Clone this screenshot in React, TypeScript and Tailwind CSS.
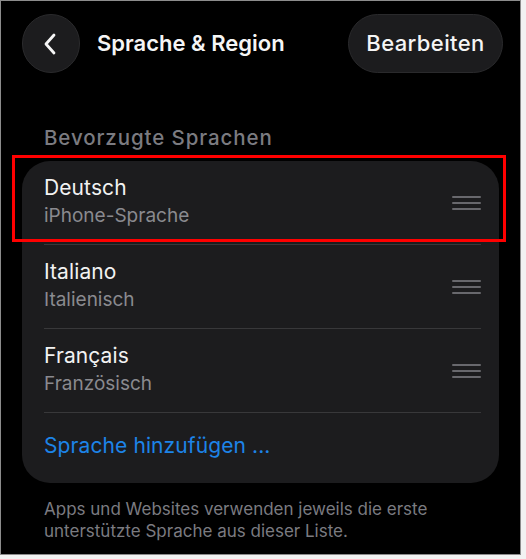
import React from "react";

function Handle() {
  return (
    <svg width="30" height="16" viewBox="0 0 30 16" className="shrink-0">
      <rect x="0" y="1" width="29" height="2" rx="1" fill="#68686d" />
      <rect x="0" y="7" width="29" height="2" rx="1" fill="#68686d" />
      <rect x="0" y="13" width="29" height="2" rx="1" fill="#68686d" />
    </svg>
  );
}

function Row({ title, sub, last }: { title: string; sub: string; last?: boolean }) {
  return (
    <div className="flex flex-col pl-[22px]">
      <div className="flex items-center pr-[17px] h-[83px]">
        <div className="flex flex-1 flex-col -mt-[2px]">
          <span className="text-[21px] leading-[26px] tracking-[0.1px] text-[#f2f2f2]">{title}</span>
          <span className="text-[19px] leading-[26px] text-[#8a8a8f] mt-[2px]">{sub}</span>
        </div>
        <Handle />
      </div>
      {!last && <div className="h-px bg-[#38383a] mr-[18px]" />}
    </div>
  );
}

export default function App() {
  return (
    <div className="w-[526px] h-[559px] bg-[#f2f2f2]" style={{ fontFamily: "Inter, 'Noto Sans', sans-serif" }}>
      <div className="w-[521px] h-[555px] bg-black border border-[#8c8c8c] relative">
        <div className="flex items-center pl-[21px] pr-[17px] pt-[13px]">
          <div className="w-[58px] h-[59px] rounded-full bg-[#1c1c1e] border border-[#2a2a2c] flex items-center justify-center">
            <svg width="20" height="24" viewBox="0 0 20 24">
              <path d="M13 3 L5 12 L13 21" stroke="#f5f5f5" strokeWidth="2.8" fill="none" strokeLinecap="round" strokeLinejoin="round" />
            </svg>
          </div>
          <span className="ml-[17px] text-[22px] font-semibold text-[#f5f5f5] tracking-[0px]">Sprache &amp; Region</span>
          <div className="flex-1" />
          <div className="h-[59px] w-[155px] rounded-full bg-[#1c1c1e] border border-[#2a2a2c] flex items-center justify-center">
            <span className="text-[22px] font-medium text-[#f5f5f5] tracking-[0.4px]">Bearbeiten</span>
          </div>
        </div>

        <div className="pl-[43px] mt-[52px] text-[20.5px] leading-[26px] font-medium tracking-[0.9px] text-[#7b7b80]">Bevorzugte Sprachen</div>

        <div className="mx-[21px] mt-[10px] rounded-[28px] bg-[#1c1c1e] overflow-hidden">
          <Row title="Deutsch" sub="iPhone-Sprache" />
          <Row title="Italiano" sub="Italienisch" />
          <Row title="Français" sub="Französisch" />
          <div className="h-[70px] pl-[22px] flex items-center">
            <span className="text-[21px] text-[#1d84e8] tracking-[0.1px] -mt-[5px]">Sprache hinzufügen ...</span>
          </div>
        </div>

        <div className="pl-[43px] pr-[20px] mt-[15px] text-[17px] leading-[22px] text-[#7b7b80]">
          Apps und Websites verwenden jeweils die erste unterstützte Sprache aus dieser Liste.
        </div>

        <div className="absolute left-[11px] top-[154px] w-[494px] h-[87px] border-[3px] border-[#ff0000]" />
      </div>
    </div>
  );
}
